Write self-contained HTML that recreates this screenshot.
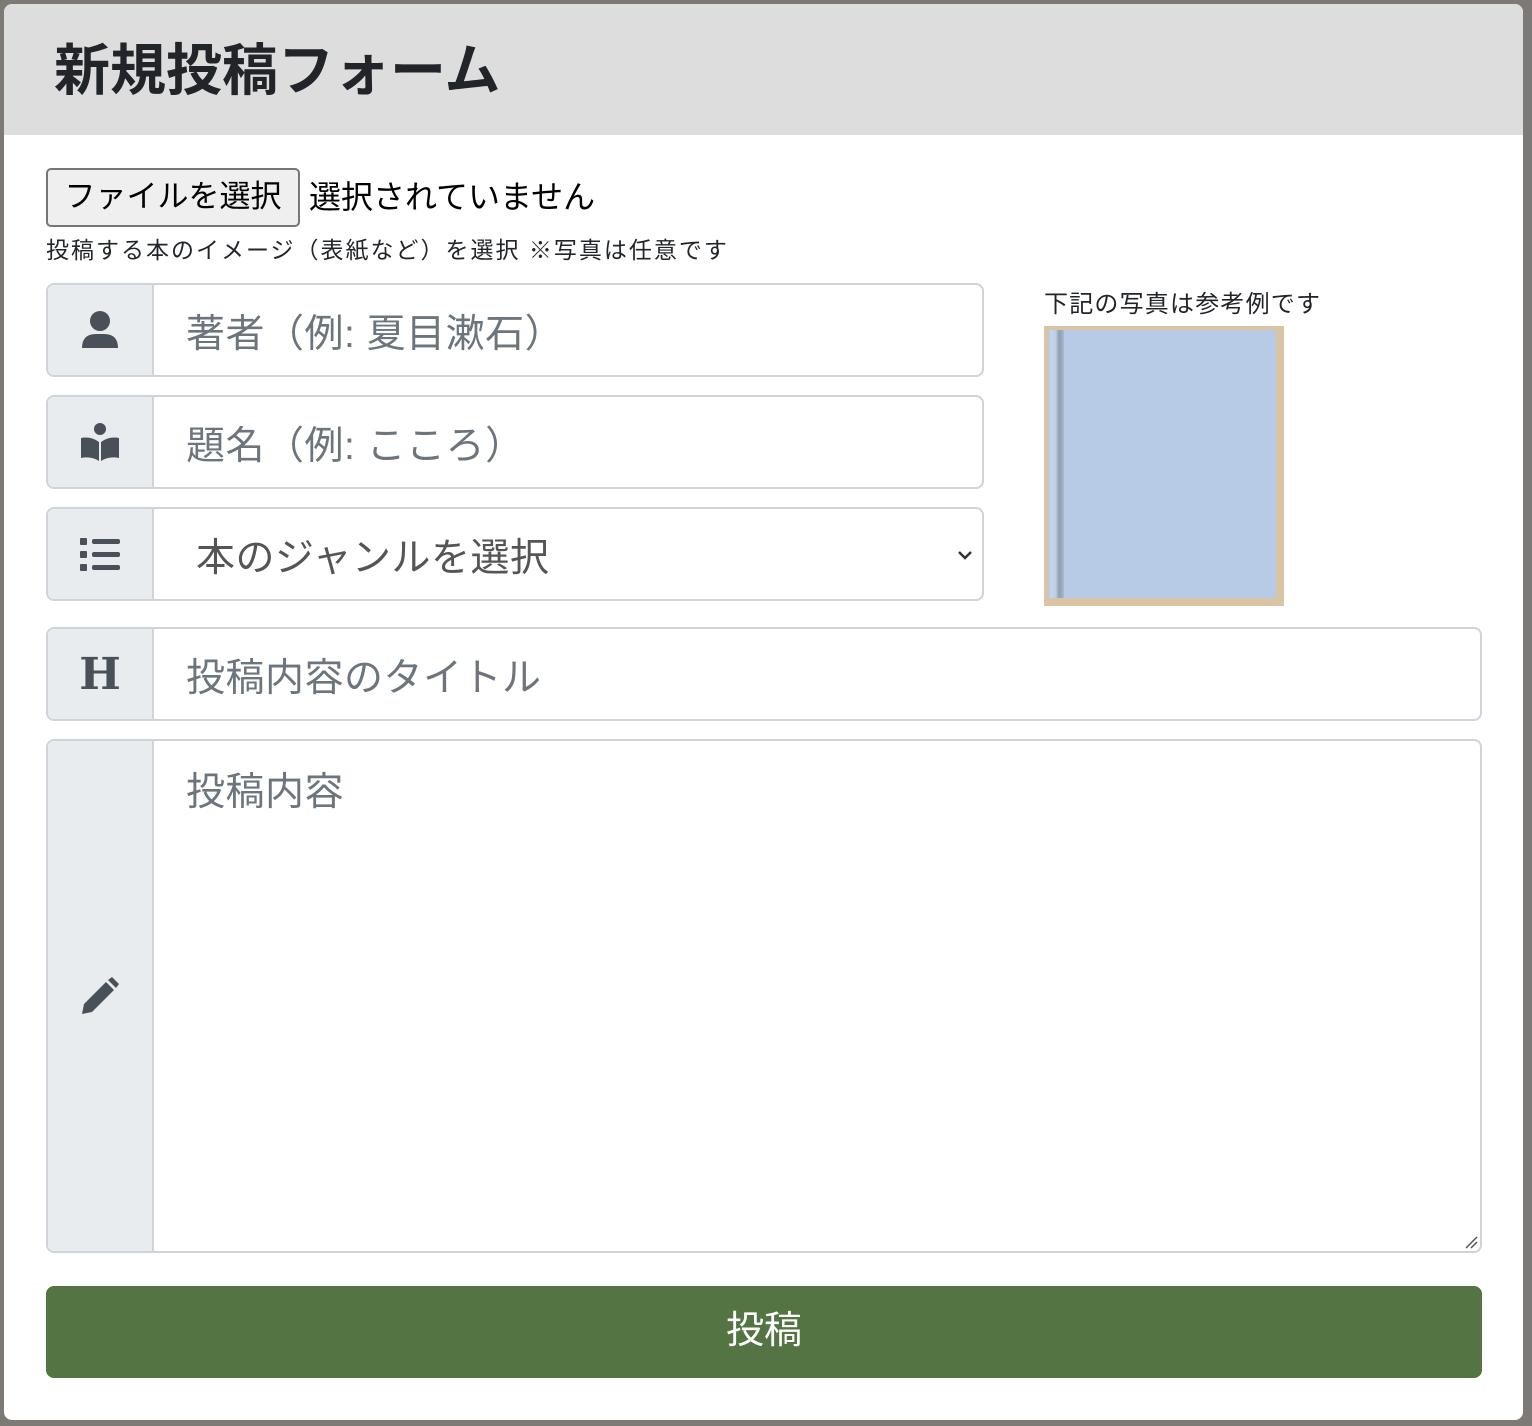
<!DOCTYPE html>
<html><head><meta charset="utf-8"><style>
*{box-sizing:border-box;margin:0;padding:0}
body{width:1532px;height:1426px;background:#7d7a76;font-family:"Liberation Sans","Noto Sans CJK JP",sans-serif;position:relative;overflow:hidden}
.card{position:absolute;left:4px;top:4px;width:1519px;height:1416px;background:#fff;border-radius:8px;overflow:hidden}
.hd{height:131px;background:#dddddd;padding-left:50px;font-size:56px;font-weight:bold;color:#212529;line-height:134px}
.fbtn{position:absolute;left:42px;top:164px;width:254px;height:59px;border:2px solid #767676;border-radius:5px;background:#efefef;font-size:31px;line-height:53px;text-align:center;color:#000}
.fnone{position:absolute;left:305px;top:168px;font-size:32px;color:#000}
.hint{position:absolute;left:42px;top:227px;font-size:23px;letter-spacing:2px;color:#212529}
.grp{position:absolute;border:2px solid #ced4da;border-radius:8px;overflow:hidden;background:#fff}
.ic{position:absolute;left:0;top:0;bottom:0;width:106px;background:#e9ecef;border-right:2px solid #ced4da;display:flex;align-items:center;justify-content:center}
.ph{position:absolute;left:138px;font-size:39px;letter-spacing:0.5px;color:#6c757d}
.note{position:absolute;left:1040px;top:280px;font-size:24px;letter-spacing:1.2px;color:#212529}
.img{position:absolute;left:1040px;top:322px;width:240px;height:280px;background:#d9c4a6}
.book{position:absolute;left:4px;top:4px;width:228px;height:268px;background:#b8cbe6}
.sp{position:absolute;left:6px;top:4px;width:14px;height:268px;background:linear-gradient(90deg,#c9d6e9,#c0cfe3 40%,#8f9db0 65%,#aab9cf)}
.btn{position:absolute;left:42px;top:1282px;width:1436px;height:92px;background:#547443;border-radius:8px;color:#fff;font-size:38px;text-align:center;line-height:90px}
</style></head><body>
<div class="card">
<div class="hd">新規投稿フォーム</div>
<div class="fbtn">ファイルを選択</div>
<div class="fnone">選択されていません</div>
<div class="hint">投稿する本のイメージ（表紙など）を選択 ※写真は任意です</div>

<div class="grp" style="left:42px;top:279px;width:938px;height:94px"><div class="ic">
<svg width="40" height="40" viewBox="0 0 40 40"><circle cx="20" cy="11" r="10" fill="#495057"/><path d="M2 38q0-14 14-14h8q14 0 14 14z" fill="#495057"/></svg></div>
<div class="ph" style="top:18px">著者（例: 夏目漱石）</div></div>

<div class="grp" style="left:42px;top:391px;width:938px;height:94px"><div class="ic">
<svg width="40" height="40" viewBox="0 0 40 40"><circle cx="20" cy="7" r="6" fill="#495057"/><path d="M1 16q10-2 18 4v19q-8-5-18-3z M21 20q8-6 18-4v20q-10-2-18 3z" fill="#495057"/></svg></div>
<div class="ph" style="top:18px">題名（例: こころ）</div></div>

<div class="grp" style="left:42px;top:503px;width:938px;height:94px"><div class="ic">
<svg width="40" height="36" viewBox="0 0 40 36"><rect x="0" y="2" width="7" height="7" rx="1" fill="#495057"/><rect x="0" y="15" width="7" height="7" rx="1" fill="#495057"/><rect x="0" y="28" width="7" height="7" rx="1" fill="#495057"/><rect x="12" y="3" width="28" height="5" rx="2" fill="#495057"/><rect x="12" y="16" width="28" height="5" rx="2" fill="#495057"/><rect x="12" y="29" width="28" height="5" rx="2" fill="#495057"/></svg></div>
<div class="ph" style="top:18px;left:148px;color:#555">本のジャンルを選択</div>
<svg style="position:absolute;right:8px;top:40px" width="18" height="12" viewBox="0 0 18 12"><path d="M3 3l6 6 6-6" stroke="#333" stroke-width="2.5" fill="none"/></svg></div>

<div class="note">下記の写真は参考例です</div>
<div class="img"><div class="book"></div><div class="sp"></div></div>

<div class="grp" style="left:42px;top:623px;width:1436px;height:94px"><div class="ic">
<span style="font-family:'DejaVu Serif',serif;font-weight:bold;font-size:44px;color:#495057">H</span></div>
<div class="ph" style="top:18px">投稿内容のタイトル</div></div>

<div class="grp" style="left:42px;top:735px;width:1436px;height:514px"><div class="ic">
<svg width="40" height="40" viewBox="0 0 40 40"><path d="M2 38l2-10 22-22 8 8-22 22z M28 4l4-3 7 7-3 4z" fill="#495057"/></svg></div>
<div class="ph" style="top:20px">投稿内容</div>
<svg style="position:absolute;right:2px;bottom:2px" width="14" height="14" viewBox="0 0 14 14"><path d="M2 13L13 2M7 13l6-6" stroke="#555" stroke-width="1.5"/></svg></div>

<div class="btn">投稿</div>
</div>
</body></html>
